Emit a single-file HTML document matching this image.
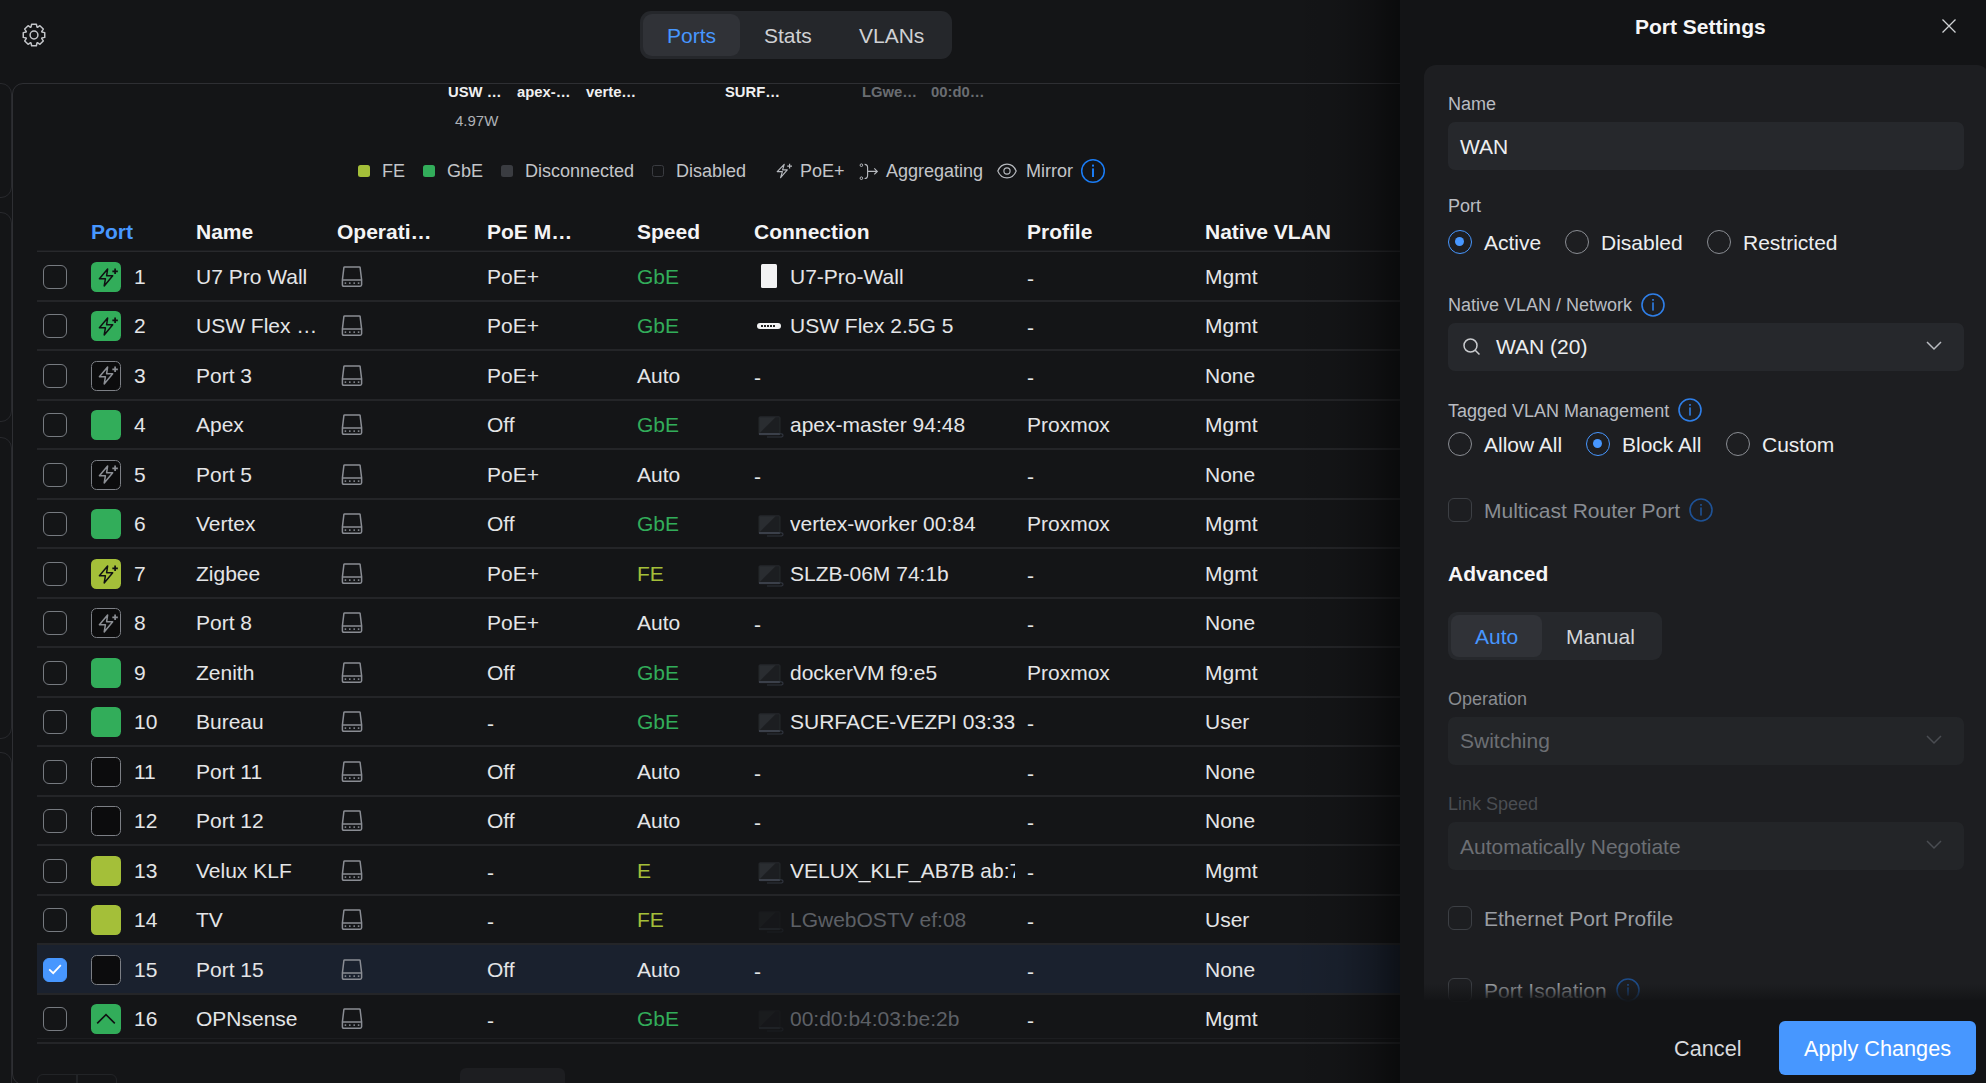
<!DOCTYPE html>
<html><head><meta charset="utf-8">
<style>
*{box-sizing:border-box;margin:0;padding:0}
html,body{width:1986px;height:1083px;overflow:hidden;background:#141517;font-family:"Liberation Sans",sans-serif;color:#e4e5e7}
.abs{position:absolute}
svg{display:block}
.row{position:absolute;left:37px;width:1400px;height:49.5px}
.sep{position:absolute;left:37px;width:1400px;height:2px;background:#242528}
.t{position:absolute;top:0;line-height:49.5px;font-size:21px;white-space:nowrap;color:#e4e5e7}
.cb{position:absolute;left:6px;top:13px;width:24px;height:24px;border:1.5px solid #767a80;border-radius:6px}
.cbon{background:#4797ff;border-color:#4797ff}
.cb svg{position:absolute;left:-1.5px;top:-1.5px}
.pi{position:absolute;left:54px;top:10px;width:30px;height:30px;border-radius:5.5px}
.po{background:#0c0c0d;border:1.5px solid #7c7f85}
.po svg{left:-1.5px!important;top:-1.5px!important}
.drv{position:absolute;left:304px;top:13.4px;width:22px;height:23px}
.ci{position:absolute;margin-top:24.75px}
.hd{position:absolute;top:210px;line-height:44px;font-size:21px;font-weight:700;color:#f4f4f5;white-space:nowrap}
.leg{position:absolute;top:159px;line-height:25px;font-size:18px;color:#c3c5c9;white-space:nowrap}
.sq{position:absolute;top:165px;width:12px;height:12px;border-radius:2.5px}
.dl{position:absolute;top:82px;line-height:20px;font-size:14.8px;font-weight:700;color:#f0f0f1;white-space:nowrap}
.panel{position:absolute;left:1400px;top:0;width:586px;height:1083px;background:#131416}
.lbl{position:absolute;left:48px;font-size:18px;line-height:22px;color:#b9bcc1;white-space:nowrap}
.inp{position:absolute;left:48px;width:516px;height:48px;background:#26282c;border-radius:7px}
.rad{position:absolute;width:24px;height:24px;border:1.5px solid #8a8d93;border-radius:50%}
.rad.on{border-color:#4797ff}
.rad.on::after{content:"";position:absolute;left:6px;top:6px;width:9px;height:9px;border-radius:50%;background:#4797ff}
.rt{position:absolute;font-size:21px;line-height:24px;color:#eceef0;white-space:nowrap}
.chk{position:absolute;left:48px;width:24px;height:24px;border:1.5px solid #3c3f44;border-radius:6px}
</style></head><body>

<!-- gear -->
<svg class="abs" style="left:22px;top:23px" width="24" height="24" viewBox="0 0 24 24"><path fill="none" stroke="#c3c5c9" stroke-width="1.5" stroke-linejoin="round" d="M8.99 4.16 L9.62 1.26 L14.38 1.26 L15.01 4.16 L15.42 4.33 L17.91 2.72 L21.28 6.09 L19.67 8.58 L19.84 8.99 L22.74 9.62 L22.74 14.38 L19.84 15.01 L19.67 15.42 L21.28 17.91 L17.91 21.28 L15.42 19.67 L15.01 19.84 L14.38 22.74 L9.62 22.74 L8.99 19.84 L8.58 19.67 L6.09 21.28 L2.72 17.91 L4.33 15.42 L4.16 15.01 L1.26 14.38 L1.26 9.62 L4.16 8.99 L4.33 8.58 L2.72 6.09 L6.09 2.72 L8.58 4.33 Z"/><circle cx="12" cy="12" r="3.9" fill="none" stroke="#c3c5c9" stroke-width="1.5"/></svg>

<!-- tabs -->
<div class="abs" style="left:640px;top:11px;width:312px;height:48px;background:#25272b;border-radius:11px"></div>
<div class="abs" style="left:643px;top:14px;width:97px;height:42px;background:#303237;border-radius:9px"></div>
<span class="abs" style="left:667px;top:24px;font-size:21px;line-height:24px;color:#4797ff">Ports</span>
<span class="abs" style="left:764px;top:24px;font-size:21px;line-height:24px;color:#cfd1d4">Stats</span>
<span class="abs" style="left:859px;top:24px;font-size:21px;line-height:24px;color:#cfd1d4">VLANs</span>

<!-- left faint cards -->
<div class="abs" style="left:-30px;top:83px;width:42px;height:115px;border:1.5px solid #28292d;border-radius:11px"></div>
<div class="abs" style="left:-30px;top:212px;width:42px;height:210px;border:1.5px solid #28292d;border-radius:11px"></div>
<div class="abs" style="left:-30px;top:437px;width:42px;height:302px;border:1.5px solid #28292d;border-radius:11px"></div>
<div class="abs" style="left:-30px;top:752px;width:42px;height:400px;border:1.5px solid #28292d;border-radius:11px"></div>

<!-- table card -->
<div class="abs" style="left:11.5px;top:82.5px;width:1500px;height:1002px;border:1.5px solid #2e2f33;border-radius:11px"></div>

<!-- device labels -->
<span class="dl" style="left:448px">USW …</span>
<span class="dl" style="left:517px">apex-…</span>
<span class="dl" style="left:586px">verte…</span>
<span class="dl" style="left:725px">SURF…</span>
<span class="dl" style="left:862px;color:#6a6d72">LGwe…</span>
<span class="dl" style="left:931px;color:#6a6d72">00:d0…</span>
<span class="abs" style="left:455px;top:111px;font-size:15px;line-height:20px;color:#aeb1b6">4.97W</span>

<!-- legend -->
<div class="sq" style="left:358px;background:#a4bf39"></div><span class="leg" style="left:382px">FE</span>
<div class="sq" style="left:423px;background:#32ad5a"></div><span class="leg" style="left:447px">GbE</span>
<div class="sq" style="left:501px;background:#3a3c41"></div><span class="leg" style="left:525px">Disconnected</span>
<div class="sq" style="left:652px;border:1.2px solid #3a3c41"></div><span class="leg" style="left:676px">Disabled</span>
<svg class="abs" style="left:770px;top:155px" width="340" height="35" viewBox="770 155 340 35">
<path d="M784.2 164.4 L777.2 171.6 H782.4 L780.6 177.6 L787.3 169.9 H782.6 Z" fill="none" stroke="#b6b9be" stroke-width="1.15" stroke-linejoin="round"/>
<path d="M789.6 163.8 V168.6 M787.2 166.2 H792" stroke="#b6b9be" stroke-width="1.2"/>
<circle cx="861.4" cy="165.2" r="1.3" fill="none" stroke="#b6b9be" stroke-width="1"/>
<circle cx="861.4" cy="178.2" r="1.3" fill="none" stroke="#b6b9be" stroke-width="1"/>
<path d="M864.6 164.4 Q867.6 164.4 867.6 167.6 V175.2 Q867.6 178.5 864.6 178.5 M867.6 171.4 H877.2 M874.3 168.4 L877.3 171.4 L874.3 174.4" fill="none" stroke="#b6b9be" stroke-width="1.15"/>
<path d="M997.8 171 C1001.5 161.8 1012.5 161.8 1016.2 171 C1012.5 180.2 1001.5 180.2 997.8 171 Z" fill="none" stroke="#b6b9be" stroke-width="1.15"/>
<circle cx="1007" cy="171" r="3.1" fill="none" stroke="#b6b9be" stroke-width="1.15"/>
<circle cx="1093" cy="171" r="11.3" fill="none" stroke="#1a7cf5" stroke-width="1.5"/>
<rect x="1092" y="164.6" width="2" height="2" fill="#1a7cf5"/><rect x="1092" y="168.4" width="2" height="8.6" fill="#1a7cf5"/>
</svg>
<span class="leg" style="left:800px">PoE+</span>
<span class="leg" style="left:886px">Aggregating</span>
<span class="leg" style="left:1026px">Mirror</span>

<!-- header -->
<span class="hd" style="left:91px;color:#4797ff">Port</span>
<span class="hd" style="left:196px">Name</span>
<span class="hd" style="left:337px">Operati…</span>
<span class="hd" style="left:487px">PoE M…</span>
<span class="hd" style="left:637px">Speed</span>
<span class="hd" style="left:754px">Connection</span>
<span class="hd" style="left:1027px">Profile</span>
<span class="hd" style="left:1205px">Native VLAN</span>
<div class="abs" style="left:37px;top:250px;width:1400px;height:1px;background:#1c1d20"></div><div class="abs" style="left:37px;top:251px;width:1400px;height:1px;background:#28292c"></div>

<div class="abs" style="left:37px;top:945px;width:1400px;height:48px;background:#1a212e"></div><div class="sep" style="top:300px"></div><div class="sep" style="top:349px"></div><div class="sep" style="top:399px"></div><div class="sep" style="top:448px"></div><div class="sep" style="top:498px"></div><div class="sep" style="top:547px"></div><div class="sep" style="top:597px"></div><div class="sep" style="top:646px"></div><div class="sep" style="top:696px"></div><div class="sep" style="top:745px"></div><div class="sep" style="top:795px"></div><div class="sep" style="top:844px"></div><div class="sep" style="top:894px"></div><div class="sep" style="top:943px"></div><div class="sep" style="top:993px"></div><div class="sep" style="top:1042px"></div><div class="row" style="top:251.5px"><div class="cb"></div><div class="pi" style="background:#32ad5a"><svg width="30" height="30" viewBox="0 0 30 30" style="position:absolute;left:0;top:0"><path d="M16.6 7.1 L8.4 16.8 H14.4 L13.2 23.9 L21.7 13.8 H15.6 Z" fill="none" stroke="#101113" stroke-width="1.5" stroke-linejoin="round"/><path d="M24.1 6.6 V12.1 M21.35 9.35 H26.85" stroke="#101113" stroke-width="1.7"/></svg></div><span class="t" style="left:97px">1</span><span class="t" style="left:159px">U7 Pro Wall</span><span class="drv"><svg width="22" height="23" viewBox="0 0 22 23"><path d="M3.5 2 H18.5 Q19 2 19.1 2.5 L20.6 14.9 V19.8 Q20.6 21.2 19.2 21.2 H2.8 Q1.4 21.2 1.4 19.8 V14.9 L2.9 2.5 Q3 2 3.5 2 Z M1.4 14.9 H20.6" fill="none" stroke="#8a8d94" stroke-width="1.5" stroke-linejoin="round"/><circle cx="4.4" cy="18.1" r="0.95" fill="#8a8d94"/><circle cx="8.8" cy="18.1" r="0.95" fill="#8a8d94"/><circle cx="13.2" cy="18.1" r="0.95" fill="#8a8d94"/><circle cx="17.6" cy="18.1" r="0.95" fill="#8a8d94"/></svg></span><span class="t" style="left:450px">PoE+</span><span class="t" style="left:600px;color:#32ad5a">GbE</span><span class="ci" style="left:724px;top:-12px;width:16px;height:24px;background:#f2f2f3;border-radius:1.5px"></span><span class="t" style="left:753px;color:#e4e5e7;width:225px;overflow:hidden">U7-Pro-Wall</span><span class="t" style="left:990px;top:2px">-</span><span class="t" style="left:1168px">Mgmt</span></div>
<div class="row" style="top:301.0px"><div class="cb"></div><div class="pi" style="background:#32ad5a"><svg width="30" height="30" viewBox="0 0 30 30" style="position:absolute;left:0;top:0"><path d="M16.6 7.1 L8.4 16.8 H14.4 L13.2 23.9 L21.7 13.8 H15.6 Z" fill="none" stroke="#101113" stroke-width="1.5" stroke-linejoin="round"/><path d="M24.1 6.6 V12.1 M21.35 9.35 H26.85" stroke="#101113" stroke-width="1.7"/></svg></div><span class="t" style="left:97px">2</span><span class="t" style="left:159px">USW Flex …</span><span class="drv"><svg width="22" height="23" viewBox="0 0 22 23"><path d="M3.5 2 H18.5 Q19 2 19.1 2.5 L20.6 14.9 V19.8 Q20.6 21.2 19.2 21.2 H2.8 Q1.4 21.2 1.4 19.8 V14.9 L2.9 2.5 Q3 2 3.5 2 Z M1.4 14.9 H20.6" fill="none" stroke="#8a8d94" stroke-width="1.5" stroke-linejoin="round"/><circle cx="4.4" cy="18.1" r="0.95" fill="#8a8d94"/><circle cx="8.8" cy="18.1" r="0.95" fill="#8a8d94"/><circle cx="13.2" cy="18.1" r="0.95" fill="#8a8d94"/><circle cx="17.6" cy="18.1" r="0.95" fill="#8a8d94"/></svg></span><span class="t" style="left:450px">PoE+</span><span class="t" style="left:600px;color:#32ad5a">GbE</span><span class="ci" style="left:720px;top:-3px;width:24px;height:6px;background:#f2f2f3;border-radius:3px"><span style="position:absolute;left:4px;top:2px;width:14px;height:2px;background:repeating-linear-gradient(90deg,#222 0 2px,transparent 2px 3px)"></span></span><span class="t" style="left:753px;color:#e4e5e7;width:225px;overflow:hidden">USW Flex 2.5G 5</span><span class="t" style="left:990px;top:2px">-</span><span class="t" style="left:1168px">Mgmt</span></div>
<div class="row" style="top:350.5px"><div class="cb"></div><div class="pi po"><svg width="30" height="30" viewBox="0 0 30 30" style="position:absolute;left:0;top:0"><path d="M16.6 7.1 L8.4 16.8 H14.4 L13.2 23.9 L21.7 13.8 H15.6 Z" fill="none" stroke="#8c8f95" stroke-width="1.5" stroke-linejoin="round"/><path d="M24.1 6.6 V12.1 M21.35 9.35 H26.85" stroke="#8c8f95" stroke-width="1.7"/></svg></div><span class="t" style="left:97px">3</span><span class="t" style="left:159px">Port 3</span><span class="drv"><svg width="22" height="23" viewBox="0 0 22 23"><path d="M3.5 2 H18.5 Q19 2 19.1 2.5 L20.6 14.9 V19.8 Q20.6 21.2 19.2 21.2 H2.8 Q1.4 21.2 1.4 19.8 V14.9 L2.9 2.5 Q3 2 3.5 2 Z M1.4 14.9 H20.6" fill="none" stroke="#8a8d94" stroke-width="1.5" stroke-linejoin="round"/><circle cx="4.4" cy="18.1" r="0.95" fill="#8a8d94"/><circle cx="8.8" cy="18.1" r="0.95" fill="#8a8d94"/><circle cx="13.2" cy="18.1" r="0.95" fill="#8a8d94"/><circle cx="17.6" cy="18.1" r="0.95" fill="#8a8d94"/></svg></span><span class="t" style="left:450px">PoE+</span><span class="t" style="left:600px;color:#e4e5e7">Auto</span><span class="t" style="left:717px;color:#e4e5e7;width:261px;overflow:hidden;top:2px">-</span><span class="t" style="left:990px;top:2px">-</span><span class="t" style="left:1168px">None</span></div>
<div class="row" style="top:400.0px"><div class="cb"></div><div class="pi" style="background:#32ad5a"></div><span class="t" style="left:97px">4</span><span class="t" style="left:159px">Apex</span><span class="drv"><svg width="22" height="23" viewBox="0 0 22 23"><path d="M3.5 2 H18.5 Q19 2 19.1 2.5 L20.6 14.9 V19.8 Q20.6 21.2 19.2 21.2 H2.8 Q1.4 21.2 1.4 19.8 V14.9 L2.9 2.5 Q3 2 3.5 2 Z M1.4 14.9 H20.6" fill="none" stroke="#8a8d94" stroke-width="1.5" stroke-linejoin="round"/><circle cx="4.4" cy="18.1" r="0.95" fill="#8a8d94"/><circle cx="8.8" cy="18.1" r="0.95" fill="#8a8d94"/><circle cx="13.2" cy="18.1" r="0.95" fill="#8a8d94"/><circle cx="17.6" cy="18.1" r="0.95" fill="#8a8d94"/></svg></span><span class="t" style="left:450px">Off</span><span class="t" style="left:600px;color:#32ad5a">GbE</span><svg class="ci" style="left:721px;top:-8.5px;opacity:1" width="27" height="22" viewBox="0 0 27 22"><rect x="1" y="0.8" width="21" height="18" rx="1" fill="#1c1e21" stroke="#2a2d31" stroke-width="0.8"/><path d="M1.4 1.2 H17.6 L1.4 17.4 Z" fill="#2a2d31"/><rect x="1" y="17" width="21" height="2" fill="#3b404a"/><path d="M21.5 17.6 Q25 17.6 25 19.4 Q25 21 22.5 21 H9" fill="none" stroke="#2f343d" stroke-width="1.1"/></svg><span class="t" style="left:753px;color:#e4e5e7;width:225px;overflow:hidden">apex-master 94:48</span><span class="t" style="left:990px">Proxmox</span><span class="t" style="left:1168px">Mgmt</span></div>
<div class="row" style="top:449.5px"><div class="cb"></div><div class="pi po"><svg width="30" height="30" viewBox="0 0 30 30" style="position:absolute;left:0;top:0"><path d="M16.6 7.1 L8.4 16.8 H14.4 L13.2 23.9 L21.7 13.8 H15.6 Z" fill="none" stroke="#8c8f95" stroke-width="1.5" stroke-linejoin="round"/><path d="M24.1 6.6 V12.1 M21.35 9.35 H26.85" stroke="#8c8f95" stroke-width="1.7"/></svg></div><span class="t" style="left:97px">5</span><span class="t" style="left:159px">Port 5</span><span class="drv"><svg width="22" height="23" viewBox="0 0 22 23"><path d="M3.5 2 H18.5 Q19 2 19.1 2.5 L20.6 14.9 V19.8 Q20.6 21.2 19.2 21.2 H2.8 Q1.4 21.2 1.4 19.8 V14.9 L2.9 2.5 Q3 2 3.5 2 Z M1.4 14.9 H20.6" fill="none" stroke="#8a8d94" stroke-width="1.5" stroke-linejoin="round"/><circle cx="4.4" cy="18.1" r="0.95" fill="#8a8d94"/><circle cx="8.8" cy="18.1" r="0.95" fill="#8a8d94"/><circle cx="13.2" cy="18.1" r="0.95" fill="#8a8d94"/><circle cx="17.6" cy="18.1" r="0.95" fill="#8a8d94"/></svg></span><span class="t" style="left:450px">PoE+</span><span class="t" style="left:600px;color:#e4e5e7">Auto</span><span class="t" style="left:717px;color:#e4e5e7;width:261px;overflow:hidden;top:2px">-</span><span class="t" style="left:990px;top:2px">-</span><span class="t" style="left:1168px">None</span></div>
<div class="row" style="top:499.0px"><div class="cb"></div><div class="pi" style="background:#32ad5a"></div><span class="t" style="left:97px">6</span><span class="t" style="left:159px">Vertex</span><span class="drv"><svg width="22" height="23" viewBox="0 0 22 23"><path d="M3.5 2 H18.5 Q19 2 19.1 2.5 L20.6 14.9 V19.8 Q20.6 21.2 19.2 21.2 H2.8 Q1.4 21.2 1.4 19.8 V14.9 L2.9 2.5 Q3 2 3.5 2 Z M1.4 14.9 H20.6" fill="none" stroke="#8a8d94" stroke-width="1.5" stroke-linejoin="round"/><circle cx="4.4" cy="18.1" r="0.95" fill="#8a8d94"/><circle cx="8.8" cy="18.1" r="0.95" fill="#8a8d94"/><circle cx="13.2" cy="18.1" r="0.95" fill="#8a8d94"/><circle cx="17.6" cy="18.1" r="0.95" fill="#8a8d94"/></svg></span><span class="t" style="left:450px">Off</span><span class="t" style="left:600px;color:#32ad5a">GbE</span><svg class="ci" style="left:721px;top:-8.5px;opacity:1" width="27" height="22" viewBox="0 0 27 22"><rect x="1" y="0.8" width="21" height="18" rx="1" fill="#1c1e21" stroke="#2a2d31" stroke-width="0.8"/><path d="M1.4 1.2 H17.6 L1.4 17.4 Z" fill="#2a2d31"/><rect x="1" y="17" width="21" height="2" fill="#3b404a"/><path d="M21.5 17.6 Q25 17.6 25 19.4 Q25 21 22.5 21 H9" fill="none" stroke="#2f343d" stroke-width="1.1"/></svg><span class="t" style="left:753px;color:#e4e5e7;width:225px;overflow:hidden">vertex-worker 00:84</span><span class="t" style="left:990px">Proxmox</span><span class="t" style="left:1168px">Mgmt</span></div>
<div class="row" style="top:548.5px"><div class="cb"></div><div class="pi" style="background:#a4bf39"><svg width="30" height="30" viewBox="0 0 30 30" style="position:absolute;left:0;top:0"><path d="M16.6 7.1 L8.4 16.8 H14.4 L13.2 23.9 L21.7 13.8 H15.6 Z" fill="none" stroke="#101113" stroke-width="1.5" stroke-linejoin="round"/><path d="M24.1 6.6 V12.1 M21.35 9.35 H26.85" stroke="#101113" stroke-width="1.7"/></svg></div><span class="t" style="left:97px">7</span><span class="t" style="left:159px">Zigbee</span><span class="drv"><svg width="22" height="23" viewBox="0 0 22 23"><path d="M3.5 2 H18.5 Q19 2 19.1 2.5 L20.6 14.9 V19.8 Q20.6 21.2 19.2 21.2 H2.8 Q1.4 21.2 1.4 19.8 V14.9 L2.9 2.5 Q3 2 3.5 2 Z M1.4 14.9 H20.6" fill="none" stroke="#8a8d94" stroke-width="1.5" stroke-linejoin="round"/><circle cx="4.4" cy="18.1" r="0.95" fill="#8a8d94"/><circle cx="8.8" cy="18.1" r="0.95" fill="#8a8d94"/><circle cx="13.2" cy="18.1" r="0.95" fill="#8a8d94"/><circle cx="17.6" cy="18.1" r="0.95" fill="#8a8d94"/></svg></span><span class="t" style="left:450px">PoE+</span><span class="t" style="left:600px;color:#a4bf39">FE</span><svg class="ci" style="left:721px;top:-8.5px;opacity:1" width="27" height="22" viewBox="0 0 27 22"><rect x="1" y="0.8" width="21" height="18" rx="1" fill="#1c1e21" stroke="#2a2d31" stroke-width="0.8"/><path d="M1.4 1.2 H17.6 L1.4 17.4 Z" fill="#2a2d31"/><rect x="1" y="17" width="21" height="2" fill="#3b404a"/><path d="M21.5 17.6 Q25 17.6 25 19.4 Q25 21 22.5 21 H9" fill="none" stroke="#2f343d" stroke-width="1.1"/></svg><span class="t" style="left:753px;color:#e4e5e7;width:225px;overflow:hidden">SLZB-06M 74:1b</span><span class="t" style="left:990px;top:2px">-</span><span class="t" style="left:1168px">Mgmt</span></div>
<div class="row" style="top:598.0px"><div class="cb"></div><div class="pi po"><svg width="30" height="30" viewBox="0 0 30 30" style="position:absolute;left:0;top:0"><path d="M16.6 7.1 L8.4 16.8 H14.4 L13.2 23.9 L21.7 13.8 H15.6 Z" fill="none" stroke="#8c8f95" stroke-width="1.5" stroke-linejoin="round"/><path d="M24.1 6.6 V12.1 M21.35 9.35 H26.85" stroke="#8c8f95" stroke-width="1.7"/></svg></div><span class="t" style="left:97px">8</span><span class="t" style="left:159px">Port 8</span><span class="drv"><svg width="22" height="23" viewBox="0 0 22 23"><path d="M3.5 2 H18.5 Q19 2 19.1 2.5 L20.6 14.9 V19.8 Q20.6 21.2 19.2 21.2 H2.8 Q1.4 21.2 1.4 19.8 V14.9 L2.9 2.5 Q3 2 3.5 2 Z M1.4 14.9 H20.6" fill="none" stroke="#8a8d94" stroke-width="1.5" stroke-linejoin="round"/><circle cx="4.4" cy="18.1" r="0.95" fill="#8a8d94"/><circle cx="8.8" cy="18.1" r="0.95" fill="#8a8d94"/><circle cx="13.2" cy="18.1" r="0.95" fill="#8a8d94"/><circle cx="17.6" cy="18.1" r="0.95" fill="#8a8d94"/></svg></span><span class="t" style="left:450px">PoE+</span><span class="t" style="left:600px;color:#e4e5e7">Auto</span><span class="t" style="left:717px;color:#e4e5e7;width:261px;overflow:hidden;top:2px">-</span><span class="t" style="left:990px;top:2px">-</span><span class="t" style="left:1168px">None</span></div>
<div class="row" style="top:647.5px"><div class="cb"></div><div class="pi" style="background:#32ad5a"></div><span class="t" style="left:97px">9</span><span class="t" style="left:159px">Zenith</span><span class="drv"><svg width="22" height="23" viewBox="0 0 22 23"><path d="M3.5 2 H18.5 Q19 2 19.1 2.5 L20.6 14.9 V19.8 Q20.6 21.2 19.2 21.2 H2.8 Q1.4 21.2 1.4 19.8 V14.9 L2.9 2.5 Q3 2 3.5 2 Z M1.4 14.9 H20.6" fill="none" stroke="#8a8d94" stroke-width="1.5" stroke-linejoin="round"/><circle cx="4.4" cy="18.1" r="0.95" fill="#8a8d94"/><circle cx="8.8" cy="18.1" r="0.95" fill="#8a8d94"/><circle cx="13.2" cy="18.1" r="0.95" fill="#8a8d94"/><circle cx="17.6" cy="18.1" r="0.95" fill="#8a8d94"/></svg></span><span class="t" style="left:450px">Off</span><span class="t" style="left:600px;color:#32ad5a">GbE</span><svg class="ci" style="left:721px;top:-8.5px;opacity:1" width="27" height="22" viewBox="0 0 27 22"><rect x="1" y="0.8" width="21" height="18" rx="1" fill="#1c1e21" stroke="#2a2d31" stroke-width="0.8"/><path d="M1.4 1.2 H17.6 L1.4 17.4 Z" fill="#2a2d31"/><rect x="1" y="17" width="21" height="2" fill="#3b404a"/><path d="M21.5 17.6 Q25 17.6 25 19.4 Q25 21 22.5 21 H9" fill="none" stroke="#2f343d" stroke-width="1.1"/></svg><span class="t" style="left:753px;color:#e4e5e7;width:225px;overflow:hidden">dockerVM f9:e5</span><span class="t" style="left:990px">Proxmox</span><span class="t" style="left:1168px">Mgmt</span></div>
<div class="row" style="top:697.0px"><div class="cb"></div><div class="pi" style="background:#32ad5a"></div><span class="t" style="left:97px">10</span><span class="t" style="left:159px">Bureau</span><span class="drv"><svg width="22" height="23" viewBox="0 0 22 23"><path d="M3.5 2 H18.5 Q19 2 19.1 2.5 L20.6 14.9 V19.8 Q20.6 21.2 19.2 21.2 H2.8 Q1.4 21.2 1.4 19.8 V14.9 L2.9 2.5 Q3 2 3.5 2 Z M1.4 14.9 H20.6" fill="none" stroke="#8a8d94" stroke-width="1.5" stroke-linejoin="round"/><circle cx="4.4" cy="18.1" r="0.95" fill="#8a8d94"/><circle cx="8.8" cy="18.1" r="0.95" fill="#8a8d94"/><circle cx="13.2" cy="18.1" r="0.95" fill="#8a8d94"/><circle cx="17.6" cy="18.1" r="0.95" fill="#8a8d94"/></svg></span><span class="t" style="left:450px;top:2px">-</span><span class="t" style="left:600px;color:#32ad5a">GbE</span><svg class="ci" style="left:721px;top:-8.5px;opacity:1" width="27" height="22" viewBox="0 0 27 22"><rect x="1" y="0.8" width="21" height="18" rx="1" fill="#1c1e21" stroke="#2a2d31" stroke-width="0.8"/><path d="M1.4 1.2 H17.6 L1.4 17.4 Z" fill="#2a2d31"/><rect x="1" y="17" width="21" height="2" fill="#3b404a"/><path d="M21.5 17.6 Q25 17.6 25 19.4 Q25 21 22.5 21 H9" fill="none" stroke="#2f343d" stroke-width="1.1"/></svg><span class="t" style="left:753px;color:#e4e5e7;width:225px;overflow:hidden">SURFACE-VEZPI 03:33</span><span class="t" style="left:990px;top:2px">-</span><span class="t" style="left:1168px">User</span></div>
<div class="row" style="top:746.5px"><div class="cb"></div><div class="pi po"></div><span class="t" style="left:97px">11</span><span class="t" style="left:159px">Port 11</span><span class="drv"><svg width="22" height="23" viewBox="0 0 22 23"><path d="M3.5 2 H18.5 Q19 2 19.1 2.5 L20.6 14.9 V19.8 Q20.6 21.2 19.2 21.2 H2.8 Q1.4 21.2 1.4 19.8 V14.9 L2.9 2.5 Q3 2 3.5 2 Z M1.4 14.9 H20.6" fill="none" stroke="#8a8d94" stroke-width="1.5" stroke-linejoin="round"/><circle cx="4.4" cy="18.1" r="0.95" fill="#8a8d94"/><circle cx="8.8" cy="18.1" r="0.95" fill="#8a8d94"/><circle cx="13.2" cy="18.1" r="0.95" fill="#8a8d94"/><circle cx="17.6" cy="18.1" r="0.95" fill="#8a8d94"/></svg></span><span class="t" style="left:450px">Off</span><span class="t" style="left:600px;color:#e4e5e7">Auto</span><span class="t" style="left:717px;color:#e4e5e7;width:261px;overflow:hidden;top:2px">-</span><span class="t" style="left:990px;top:2px">-</span><span class="t" style="left:1168px">None</span></div>
<div class="row" style="top:796.0px"><div class="cb"></div><div class="pi po"></div><span class="t" style="left:97px">12</span><span class="t" style="left:159px">Port 12</span><span class="drv"><svg width="22" height="23" viewBox="0 0 22 23"><path d="M3.5 2 H18.5 Q19 2 19.1 2.5 L20.6 14.9 V19.8 Q20.6 21.2 19.2 21.2 H2.8 Q1.4 21.2 1.4 19.8 V14.9 L2.9 2.5 Q3 2 3.5 2 Z M1.4 14.9 H20.6" fill="none" stroke="#8a8d94" stroke-width="1.5" stroke-linejoin="round"/><circle cx="4.4" cy="18.1" r="0.95" fill="#8a8d94"/><circle cx="8.8" cy="18.1" r="0.95" fill="#8a8d94"/><circle cx="13.2" cy="18.1" r="0.95" fill="#8a8d94"/><circle cx="17.6" cy="18.1" r="0.95" fill="#8a8d94"/></svg></span><span class="t" style="left:450px">Off</span><span class="t" style="left:600px;color:#e4e5e7">Auto</span><span class="t" style="left:717px;color:#e4e5e7;width:261px;overflow:hidden;top:2px">-</span><span class="t" style="left:990px;top:2px">-</span><span class="t" style="left:1168px">None</span></div>
<div class="row" style="top:845.5px"><div class="cb"></div><div class="pi" style="background:#a4bf39"></div><span class="t" style="left:97px">13</span><span class="t" style="left:159px">Velux KLF</span><span class="drv"><svg width="22" height="23" viewBox="0 0 22 23"><path d="M3.5 2 H18.5 Q19 2 19.1 2.5 L20.6 14.9 V19.8 Q20.6 21.2 19.2 21.2 H2.8 Q1.4 21.2 1.4 19.8 V14.9 L2.9 2.5 Q3 2 3.5 2 Z M1.4 14.9 H20.6" fill="none" stroke="#8a8d94" stroke-width="1.5" stroke-linejoin="round"/><circle cx="4.4" cy="18.1" r="0.95" fill="#8a8d94"/><circle cx="8.8" cy="18.1" r="0.95" fill="#8a8d94"/><circle cx="13.2" cy="18.1" r="0.95" fill="#8a8d94"/><circle cx="17.6" cy="18.1" r="0.95" fill="#8a8d94"/></svg></span><span class="t" style="left:450px;top:2px">-</span><span class="t" style="left:600px;color:#a4bf39">E</span><svg class="ci" style="left:721px;top:-8.5px;opacity:1" width="27" height="22" viewBox="0 0 27 22"><rect x="1" y="0.8" width="21" height="18" rx="1" fill="#1c1e21" stroke="#2a2d31" stroke-width="0.8"/><path d="M1.4 1.2 H17.6 L1.4 17.4 Z" fill="#2a2d31"/><rect x="1" y="17" width="21" height="2" fill="#3b404a"/><path d="M21.5 17.6 Q25 17.6 25 19.4 Q25 21 22.5 21 H9" fill="none" stroke="#2f343d" stroke-width="1.1"/></svg><span class="t" style="left:753px;color:#e4e5e7;width:225px;overflow:hidden">VELUX_KLF_AB7B ab:7</span><span class="t" style="left:990px;top:2px">-</span><span class="t" style="left:1168px">Mgmt</span></div>
<div class="row" style="top:895.0px"><div class="cb"></div><div class="pi" style="background:#a4bf39"></div><span class="t" style="left:97px">14</span><span class="t" style="left:159px">TV</span><span class="drv"><svg width="22" height="23" viewBox="0 0 22 23"><path d="M3.5 2 H18.5 Q19 2 19.1 2.5 L20.6 14.9 V19.8 Q20.6 21.2 19.2 21.2 H2.8 Q1.4 21.2 1.4 19.8 V14.9 L2.9 2.5 Q3 2 3.5 2 Z M1.4 14.9 H20.6" fill="none" stroke="#8a8d94" stroke-width="1.5" stroke-linejoin="round"/><circle cx="4.4" cy="18.1" r="0.95" fill="#8a8d94"/><circle cx="8.8" cy="18.1" r="0.95" fill="#8a8d94"/><circle cx="13.2" cy="18.1" r="0.95" fill="#8a8d94"/><circle cx="17.6" cy="18.1" r="0.95" fill="#8a8d94"/></svg></span><span class="t" style="left:450px;top:2px">-</span><span class="t" style="left:600px;color:#a4bf39">FE</span><svg class="ci" style="left:721px;top:-8.5px;opacity:0.3" width="27" height="22" viewBox="0 0 27 22"><rect x="1" y="0.8" width="21" height="18" rx="1" fill="#1c1e21" stroke="#2a2d31" stroke-width="0.8"/><path d="M1.4 1.2 H17.6 L1.4 17.4 Z" fill="#2a2d31"/><rect x="1" y="17" width="21" height="2" fill="#3b404a"/><path d="M21.5 17.6 Q25 17.6 25 19.4 Q25 21 22.5 21 H9" fill="none" stroke="#2f343d" stroke-width="1.1"/></svg><span class="t" style="left:753px;color:#5d6066;width:225px;overflow:hidden">LGwebOSTV ef:08</span><span class="t" style="left:990px;top:2px">-</span><span class="t" style="left:1168px">User</span></div>
<div class="row sel" style="top:944.5px"><div class="cb cbon"><svg width="24" height="24" viewBox="0 0 24 24"><path d="M6.2 12.4 L10.2 16.2 L17.8 8.2" fill="none" stroke="#fff" stroke-width="1.8"/></svg></div><div class="pi po"></div><span class="t" style="left:97px">15</span><span class="t" style="left:159px">Port 15</span><span class="drv"><svg width="22" height="23" viewBox="0 0 22 23"><path d="M3.5 2 H18.5 Q19 2 19.1 2.5 L20.6 14.9 V19.8 Q20.6 21.2 19.2 21.2 H2.8 Q1.4 21.2 1.4 19.8 V14.9 L2.9 2.5 Q3 2 3.5 2 Z M1.4 14.9 H20.6" fill="none" stroke="#8a8d94" stroke-width="1.5" stroke-linejoin="round"/><circle cx="4.4" cy="18.1" r="0.95" fill="#8a8d94"/><circle cx="8.8" cy="18.1" r="0.95" fill="#8a8d94"/><circle cx="13.2" cy="18.1" r="0.95" fill="#8a8d94"/><circle cx="17.6" cy="18.1" r="0.95" fill="#8a8d94"/></svg></span><span class="t" style="left:450px">Off</span><span class="t" style="left:600px;color:#e4e5e7">Auto</span><span class="t" style="left:717px;color:#e4e5e7;width:261px;overflow:hidden;top:2px">-</span><span class="t" style="left:990px;top:2px">-</span><span class="t" style="left:1168px">None</span></div>
<div class="row" style="top:994.0px"><div class="cb"></div><div class="pi" style="background:#32ad5a"><svg width="30" height="30" viewBox="0 0 30 30" style="position:absolute;left:0;top:0"><path d="M6.2 19.4 L15 10.6 L23.8 19.4" fill="none" stroke="#101113" stroke-width="1.6"/></svg></div><span class="t" style="left:97px">16</span><span class="t" style="left:159px">OPNsense</span><span class="drv"><svg width="22" height="23" viewBox="0 0 22 23"><path d="M3.5 2 H18.5 Q19 2 19.1 2.5 L20.6 14.9 V19.8 Q20.6 21.2 19.2 21.2 H2.8 Q1.4 21.2 1.4 19.8 V14.9 L2.9 2.5 Q3 2 3.5 2 Z M1.4 14.9 H20.6" fill="none" stroke="#8a8d94" stroke-width="1.5" stroke-linejoin="round"/><circle cx="4.4" cy="18.1" r="0.95" fill="#8a8d94"/><circle cx="8.8" cy="18.1" r="0.95" fill="#8a8d94"/><circle cx="13.2" cy="18.1" r="0.95" fill="#8a8d94"/><circle cx="17.6" cy="18.1" r="0.95" fill="#8a8d94"/></svg></span><span class="t" style="left:450px;top:2px">-</span><span class="t" style="left:600px;color:#32ad5a">GbE</span><svg class="ci" style="left:721px;top:-8.5px;opacity:0.3" width="27" height="22" viewBox="0 0 27 22"><rect x="1" y="0.8" width="21" height="18" rx="1" fill="#1c1e21" stroke="#2a2d31" stroke-width="0.8"/><path d="M1.4 1.2 H17.6 L1.4 17.4 Z" fill="#2a2d31"/><rect x="1" y="17" width="21" height="2" fill="#3b404a"/><path d="M21.5 17.6 Q25 17.6 25 19.4 Q25 21 22.5 21 H9" fill="none" stroke="#2f343d" stroke-width="1.1"/></svg><span class="t" style="left:753px;color:#5d6066;width:225px;overflow:hidden">00:d0:b4:03:be:2b</span><span class="t" style="left:990px;top:2px">-</span><span class="t" style="left:1168px">Mgmt</span></div>

<!-- bottom bits -->
<div class="abs" style="left:37px;top:1038px;width:1400px;height:1px;background:#1c1d20"></div>
<div class="abs" style="left:37px;top:1074px;width:80px;height:30px;border:1.5px solid #222427;border-radius:6px"></div>
<div class="abs" style="left:76px;top:1074px;width:1.5px;height:30px;background:#222427"></div>
<div class="abs" style="left:460px;top:1068px;width:105px;height:30px;background:#1d1e21;border-radius:6px"></div>

<!-- shadow -->
<div class="abs" style="left:1290px;top:0;width:110px;height:1083px;background:linear-gradient(90deg,rgba(0,0,0,0) 0%,rgba(0,0,0,0.08) 45%,rgba(0,0,0,0.25) 75%,rgba(0,0,0,0.5) 100%)"></div>

<!-- panel -->
<div class="panel">
  <span class="abs" style="left:235px;top:15px;font-size:21px;line-height:24px;font-weight:700;color:#f6f6f7">Port Settings</span>
  <svg class="abs" style="left:541px;top:18px" width="16" height="16" viewBox="0 0 16 16"><path d="M1.5 1.5 L14.5 14.5 M14.5 1.5 L1.5 14.5" stroke="#d0d2d5" stroke-width="1.3"/></svg>
  <div class="abs" style="left:24px;top:65px;width:565px;height:1100px;background:#1d1e21;border-radius:12px"></div>

  <span class="lbl" style="top:93px">Name</span>
  <div class="inp" style="top:122px"></div>
  <span class="rt" style="left:60px;top:135px">WAN</span>

  <span class="lbl" style="top:195px">Port</span>
  <div class="rad on" style="left:48px;top:230px"></div><span class="rt" style="left:84px;top:231px">Active</span>
  <div class="rad" style="left:165px;top:230px"></div><span class="rt" style="left:201px;top:231px">Disabled</span>
  <div class="rad" style="left:307px;top:230px"></div><span class="rt" style="left:343px;top:231px">Restricted</span>

  <span class="lbl" style="top:294px">Native VLAN / Network</span>
  <div class="abs" style="left:241px;top:293px"><svg width="24" height="24" viewBox="0 0 24 24" style="opacity:1"><circle cx="12" cy="12" r="11" fill="none" stroke="#2f7fe8" stroke-width="1.6"/><rect x="11.2" y="6" width="1.6" height="1.8" fill="#2f7fe8"/><rect x="11.2" y="9.4" width="1.6" height="8.2" fill="#2f7fe8"/></svg></div>
  <div class="inp" style="top:323px"></div>
  <svg class="abs" style="left:62px;top:337px" width="20" height="20" viewBox="0 0 20 20"><circle cx="8.5" cy="8.5" r="6.5" fill="none" stroke="#c9cbce" stroke-width="1.5"/><path d="M13.2 13.2 L17.5 17.5" stroke="#c9cbce" stroke-width="1.5"/></svg>
  <span class="rt" style="left:96px;top:335px">WAN (20)</span>
  <div class="abs" style="left:526px;top:341px"><svg width="16" height="10" viewBox="0 0 16 10"><path d="M1 1 L8 8 L15 1" fill="none" stroke="#b9bcc1" stroke-width="1.5"/></svg></div>

  <span class="lbl" style="top:400px">Tagged VLAN Management</span>
  <div class="abs" style="left:278px;top:398px"><svg width="24" height="24" viewBox="0 0 24 24" style="opacity:1"><circle cx="12" cy="12" r="11" fill="none" stroke="#2f7fe8" stroke-width="1.6"/><rect x="11.2" y="6" width="1.6" height="1.8" fill="#2f7fe8"/><rect x="11.2" y="9.4" width="1.6" height="8.2" fill="#2f7fe8"/></svg></div>
  <div class="rad" style="left:48px;top:432px"></div><span class="rt" style="left:84px;top:433px">Allow All</span>
  <div class="rad on" style="left:186px;top:432px"></div><span class="rt" style="left:222px;top:433px">Block All</span>
  <div class="rad" style="left:326px;top:432px"></div><span class="rt" style="left:362px;top:433px">Custom</span>

  <div class="chk" style="top:498px"></div>
  <span class="rt" style="left:84px;top:499px;color:#898d93">Multicast Router Port</span>
  <div class="abs" style="left:289px;top:498px"><svg width="24" height="24" viewBox="0 0 24 24" style="opacity:0.85"><circle cx="12" cy="12" r="11" fill="none" stroke="#1f5cab" stroke-width="1.6"/><rect x="11.2" y="6" width="1.6" height="1.8" fill="#1f5cab"/><rect x="11.2" y="9.4" width="1.6" height="8.2" fill="#1f5cab"/></svg></div>

  <span class="abs" style="left:48px;top:562px;font-size:21px;line-height:24px;font-weight:700;color:#f6f6f7">Advanced</span>
  <div class="abs" style="left:48px;top:612px;width:214px;height:48px;background:#26282c;border-radius:9px"></div>
  <div class="abs" style="left:51px;top:615px;width:91px;height:42px;background:#303237;border-radius:8px"></div>
  <span class="rt" style="left:75px;top:625px;color:#4797ff">Auto</span>
  <span class="rt" style="left:166px;top:625px;color:#d3d5d8">Manual</span>

  <span class="lbl" style="top:688px;color:#8a8d92">Operation</span>
  <div class="inp" style="top:717px;background:#232528"></div>
  <span class="rt" style="left:60px;top:729px;color:#6c6f74">Switching</span>
  <div class="abs" style="left:526px;top:735px"><svg width="16" height="10" viewBox="0 0 16 10"><path d="M1 1 L8 8 L15 1" fill="none" stroke="#4a4d52" stroke-width="1.5"/></svg></div>

  <span class="lbl" style="top:793px;color:#4a4d52">Link Speed</span>
  <div class="inp" style="top:822px;background:#232528"></div>
  <span class="rt" style="left:60px;top:835px;color:#6c6f74">Automatically Negotiate</span>
  <div class="abs" style="left:526px;top:840px"><svg width="16" height="10" viewBox="0 0 16 10"><path d="M1 1 L8 8 L15 1" fill="none" stroke="#4a4d52" stroke-width="1.5"/></svg></div>

  <div class="chk" style="top:906px"></div>
  <span class="rt" style="left:84px;top:907px;color:#9a9da2">Ethernet Port Profile</span>

  <div class="chk" style="top:978px"></div>
  <span class="rt" style="left:84px;top:979px;color:#9a9da2">Port Isolation</span>
  <div class="abs" style="left:216px;top:978px"><svg width="24" height="24" viewBox="0 0 24 24" style="opacity:0.75"><circle cx="12" cy="12" r="11" fill="none" stroke="#1f5cab" stroke-width="1.6"/><rect x="11.2" y="6" width="1.6" height="1.8" fill="#1f5cab"/><rect x="11.2" y="9.4" width="1.6" height="8.2" fill="#1f5cab"/></svg></div>

  <!-- footer -->
  <div class="abs" style="left:0;top:984px;width:586px;height:16px;background:linear-gradient(180deg,rgba(19,20,22,0),rgba(19,20,22,0.9))"></div>
  <div class="abs" style="left:0;top:1000px;width:586px;height:8px;background:rgba(19,20,22,0.95)"></div>
  <div class="abs" style="left:0;top:1007px;width:586px;height:76px;background:#131416"></div>
  <span class="rt" style="left:274px;top:1037px;color:#d9dbde;font-size:21.7px">Cancel</span>
  <div class="abs" style="left:379px;top:1021px;width:197px;height:54px;background:#4797ff;border-radius:6px"></div>
  <span class="rt" style="left:404px;top:1037px;color:#fff;font-size:21.7px">Apply Changes</span>
</div>

</body></html>
